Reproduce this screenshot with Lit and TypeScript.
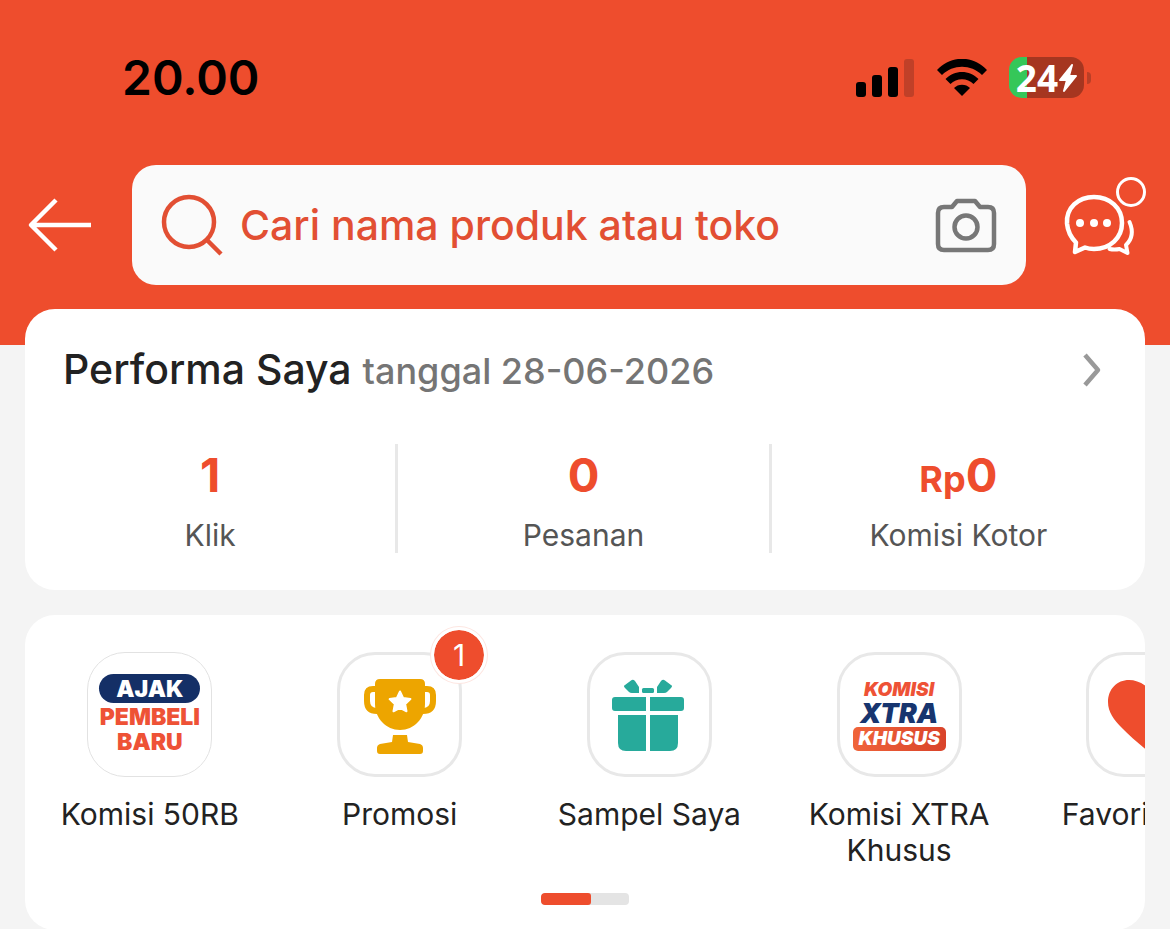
import { LitElement, html, css, svg } from "lit";
import { customElement } from "lit/decorators.js";

const trophy = svg`
  <svg class="glyph" viewBox="0 0 124 124" aria-hidden="true">
    <g fill="none" stroke="#eda500" stroke-width="6">
      <path d="M42 36h-7q-6 0-6 6v6q0 10 10 10h6" />
      <path d="M82 36h7q6 0 6 6v6q0 10-10 10h-6" />
    </g>
    <path fill="#eda500" d="M42 26h40q5 0 5 5v20c0 14-11 26-25 26S37 65 37 51V31q0-5 5-5z" />
    <path fill="#eda500" d="M55 82h14l1 7 12 2q3 1 3 4v3q0 3-3 3H42q-3 0-3-3v-3q0-3 3-4l12-2z" />
    <path fill="#fff" stroke="#fff" stroke-width="2" stroke-linejoin="round"
      d="M62 38.500l3.200 6.600 7.200 1-5.200 5 1.300 7.200-6.500-3.500-6.500 3.500 1.300-7.200-5.200-5 7.200-1z" />
  </svg>`;

const gift = svg`
  <svg class="glyph" viewBox="1 1 124 124" aria-hidden="true">
    <g fill="#27aa9b">
      <path d="M39 33l6-4.500q2-1.500 4 .5l4 6v6h-7q-2 0-3-1l-4-4q-2-2 0-3z" />
      <path d="M85 33l-6-4.500q-2-1.500-4 .5l-4 6v6h7q2 0 3-1l4-4q2-2 0-3z" />
      <rect x="56" y="36" width="12" height="5" rx="1.500" />
      <path d="M29 45h31v14H29q-3 0-3-3v-8q0-3 3-3zM64 45h31q3 0 3 3v8q0 3-3 3H64z" />
      <path d="M32 63h28v36H40q-8 0-8-8zM64 63h28v28q0 8-8 8H64z" />
    </g>
  </svg>`;

const heart = svg`
  <svg class="glyph" viewBox="0 0 124 124" aria-hidden="true">
    <path fill="#ee4d2d" d="M62 36C56 30 49 27 42 27c-12 0-21 9-21 22 0 10 6 18 14 26 8 8 17 16 27 24 10-8 19-16 27-24 8-8 14-16 14-26 0-13-9-22-21-22-7 0-14 3-20 9z" />
  </svg>`;

const buyerLogo = html`
  <span class="logo">
    <span class="pill">AJAK</span><span class="word">PEMBELI</span><span class="word">BARU</span>
  </span>`;

const xtraLogo = html`
  <span class="logo slanted">
    <span class="komisi">KOMISI</span><span class="xtra">XTRA</span><span class="khusus">KHUSUS</span>
  </span>`;

const stats = [
  { prefix: "", value: "1", label: "Klik" },
  { prefix: "", value: "0", label: "Pesanan" },
  { prefix: "Rp", value: "0", label: "Komisi Kotor" },
];

const shortcuts = [
  { label: "Komisi 50RB", art: buyerLogo, badge: "", thin: true },
  { label: "Promosi", art: trophy, badge: "1", thin: false },
  { label: "Sampel Saya", art: gift, badge: "", thin: false },
  { label: "Komisi XTRA Khusus", art: xtraLogo, badge: "", thin: false },
  { label: "Favorit Saya", art: heart, badge: "", thin: false },
];

@customElement("app-root")
export class AppRoot extends LitElement {
  static styles = css`
    :host {
      display: block;
      min-height: 100vh;
      background: #f4f4f4;
      color: #222;
      font-family: Inter, "Liberation Sans", sans-serif;
    }
    * { box-sizing: border-box; }
    a { color: inherit; text-decoration: none; }
    button { border: 0; padding: 0; background: none; font: inherit; cursor: pointer; }
    svg { display: block; }

    .header { background: #ee4d2d; padding-bottom: 60px; }
    .status {
      display: flex;
      align-items: center;
      justify-content: space-between;
      height: 165px;
      padding: 0 79px 10px 122px;
    }
    .time { color: #000; font-size: 48px; font-weight: 600; line-height: 60px; }
    .signals { display: flex; align-items: center; gap: 22px; }
    .battery {
      display: flex;
      align-items: center;
      gap: 3px;
    }
    .charge {
      display: flex;
      align-items: center;
      justify-content: center;
      gap: 1px;
      width: 75px;
      height: 41px;
      border-radius: 13px;
      background: linear-gradient(90deg, #35c759 24%, #a63620 24%);
      color: #fff;
      font-family: "Noto Sans", sans-serif;
      font-size: 37px;
      font-weight: 700;
      line-height: 40px;
    }
    .tip { width: 4px; height: 12px; border-radius: 0 4px 4px 0; background: #b93f27; }

    .bar { display: grid; grid-template-columns: 132px 1fr 144px; align-items: center; }
    .back { padding-left: 27px; justify-self: start; }
    .chat { justify-self: start; padding-left: 36px; }
    .search {
      display: flex;
      align-items: center;
      height: 120px;
      padding: 0 28px;
      border-radius: 24px;
      background: #fafafa;
    }
    .field {
      flex: 1;
      min-width: 0;
      border: 0;
      outline: 0;
      padding: 0 0 0 16px;
      background: none;
      font: 500 41px/60px Inter, "Liberation Sans", sans-serif;
      color: #e24f33;
    }
    .field::placeholder { color: #e24f33; opacity: 1; }

    .content { padding: 0 25px; margin-top: -36px; display: grid; gap: 25px; }
    .card { background: #fff; border-radius: 30px; min-width: 0; }
    .performance { padding: 30px 0 37px; }
    .heading {
      display: flex;
      align-items: center;
      justify-content: space-between;
      padding: 0 43px 0 38px;
    }
    .title { margin: 0; font-size: 41px; font-weight: 500; line-height: 60px; }
    .date { font-size: 36px; color: #757575; }
    .stats { display: grid; grid-template-columns: repeat(3, 1fr); margin: 43px 0 0; }
    .stat {
      display: flex;
      flex-direction: column-reverse;
      justify-content: flex-end;
      height: 109px;
      text-align: center;
    }
    .stat:not(:last-child) { border-right: 3px solid #e8e8e8; }
    .value { margin: 0; color: #ee4d2d; font-size: 47px; font-weight: 700; line-height: 62px; }
    .prefix { font-size: 36px; line-height: 36px; }
    .name { margin-top: 11px; color: #555; font-size: 30px; line-height: 36px; }

    .shortcuts { overflow: hidden; padding: 37px 0 25px; }
    .track { display: flex; list-style: none; margin: 0; padding: 0; }
    .item { flex: 0 0 22.3%; }
    .link { display: flex; flex-direction: column; align-items: center; gap: 19px; }
    .tile {
      position: relative;
      display: grid;
      place-items: center;
      width: 125px;
      height: 125px;
      border: 3px solid #e8e8e8;
      border-radius: 38px;
    }
    .tile.thin { border-width: 1px; border-color: #e2e2e2; }
    .glyph { width: 124px; height: 124px; margin: -3px; }
    .badge {
      position: absolute;
      top: -28px;
      right: -28px;
      width: 56px;
      height: 56px;
      border: 3px solid #fff;
      border-radius: 50%;
      background: #ee4d2d;
      background-clip: padding-box;
      box-shadow: 0 0 0 1px #fde6e1;
      color: #fff;
      font-size: 30px;
      line-height: 50px;
      text-align: center;
    }
    .label {
      width: 200px;
      min-height: 72px;
      font-size: 30px;
      line-height: 36px;
      text-align: center;
    }
    .logo {
      display: flex;
      flex-direction: column;
      align-items: center;
      font-size: 23px;
      font-weight: 900;
      line-height: 25px;
      color: #ee5236;
    }
    .pill {
      width: 101px;
      height: 29px;
      margin-bottom: 2px;
      border-radius: 15px;
      background: #142f66;
      color: #fff;
      line-height: 30px;
      text-align: center;
    }
    .slanted { font-style: italic; font-size: 19px; line-height: 23px; }
    .xtra { color: #17356f; font-size: 27px; line-height: 25px; }
    .khusus {
      width: 93px;
      margin-top: 1px;
      border-radius: 5px;
      background: linear-gradient(90deg, #f0643a, #d9432a);
      color: #fff;
      line-height: 24px;
      text-align: center;
    }
    .pager {
      width: 88px;
      height: 12px;
      margin: 25px auto 0;
      border-radius: 4px;
      overflow: hidden;
      background: #e4e4e4;
    }
    .thumb { width: 57%; height: 100%; border-radius: 3px; background: #ee4d2d; }
  `;

  render() {
    return html`
      <header class="header">
        <div class="status">
          <span class="time">20.00</span>
          <div class="signals">
            <svg width="59" height="38" viewBox="0 0 59 38" aria-hidden="true">
              <rect x="0" y="23" width="10" height="15" rx="3" />
              <rect x="16" y="16" width="10" height="22" rx="3" />
              <rect x="32" y="8" width="10" height="30" rx="3" />
              <rect x="48" y="0" width="10" height="38" rx="3" fill="#c04028" />
            </svg>
            <svg width="50" height="37" viewBox="0 0 50 37" aria-hidden="true">
              <path d="M0 11C14-4 36-4 50 11l-5 5C34 5 16 5 5 16z" />
              <path d="M8.500 20c9-9.500 24-9.500 33 0l-5 5c-6-6.500-17-6.500-23 0z" />
              <path d="M17 29c4-4.500 12-4.500 16 0l-8 8z" />
            </svg>
            <div class="battery">
              <div class="charge">
                <span>24</span>
                <svg width="18" height="28" viewBox="0 0 18 28" aria-hidden="true">
                  <path fill="#fff" stroke="#fff" stroke-width="2" stroke-linejoin="round" d="M13 1L1 16h7L5 27l12-15h-7z" />
                </svg>
              </div>
              <span class="tip"></span>
            </div>
          </div>
        </div>
        <div class="bar">
          <button class="back" aria-label="Kembali">
            <svg width="64" height="56" viewBox="0 0 64 56" fill="none" stroke="#fff" stroke-width="4.500">
              <path d="M29 3L4 28l25 25M4 28h60" stroke-linejoin="round" />
            </svg>
          </button>
          <div class="search">
            <svg width="64" height="64" viewBox="0 0 64 64" fill="none" stroke="#e24f33" stroke-width="4.500" aria-hidden="true">
              <circle cx="29" cy="29" r="25" />
              <path d="M47 47l14 14" />
            </svg>
            <input class="field" type="search" aria-label="Cari nama produk atau toko" placeholder="Cari nama produk atau toko" />
            <button aria-label="Cari dengan kamera">
              <svg width="64" height="56" viewBox="0 0 64 56" fill="none" stroke="#777" stroke-width="4.500" stroke-linejoin="round">
                <path d="M23 4h18l5 6h8q6 0 6 6v31q0 6-6 6H10q-6 0-6-6V16q0-6 6-6h8z" />
                <circle cx="32" cy="30" r="11.500" />
              </svg>
            </button>
          </div>
          <button class="chat" aria-label="Pesan">
            <svg width="86" height="96" viewBox="0 12 86 96" fill="none" stroke="#fff" stroke-linecap="round" stroke-linejoin="round">
              <circle cx="69" cy="27" r="13.500" stroke-width="3" />
              <path stroke-width="4.500" d="M14 77.500q-8-8-9-19C4 43 16 32 32 32s28 11 28 26-12 26-28 26q-5 0-9-1.500L13 87z" />
              <path stroke-width="4" d="M67.500 57q6 14-3.500 23l1.500 8-8-4q-5 1-10 0" />
              <g fill="#fff" stroke="none">
                <circle cx="18" cy="58" r="4" />
                <circle cx="32" cy="58" r="4" />
                <circle cx="45" cy="58" r="4" />
              </g>
            </svg>
          </button>
        </div>
      </header>
      <main class="content">
        <section class="card performance">
          <a class="heading" href="#performa">
            <h2 class="title">Performa Saya <span class="date">tanggal 28-06-2026</span></h2>
            <svg width="20" height="36" viewBox="0 0 20 36" fill="none" stroke="#999" stroke-width="4.500" stroke-linejoin="round" aria-hidden="true">
              <path d="M3 3l13 15L3 33" />
            </svg>
          </a>
          <dl class="stats">
            ${stats.map((s) => html`
              <div class="stat">
                <dt class="name">${s.label}</dt>
                <dd class="value">${s.prefix ? html`<span class="prefix">${s.prefix}</span>` : ""}${s.value}</dd>
              </div>`)}
          </dl>
        </section>
        <nav class="card shortcuts" aria-label="Menu">
          <ul class="track">
            ${shortcuts.map((s) => html`
              <li class="item">
                <a class="link" href="#menu">
                  <span class="tile ${s.thin ? "thin" : ""}">
                    ${s.art}${s.badge ? html`<span class="badge">${s.badge}</span>` : ""}
                  </span>
                  <span class="label">${s.label}</span>
                </a>
              </li>`)}
          </ul>
          <div class="pager"><div class="thumb"></div></div>
        </nav>
      </main>
    `;
  }
}
